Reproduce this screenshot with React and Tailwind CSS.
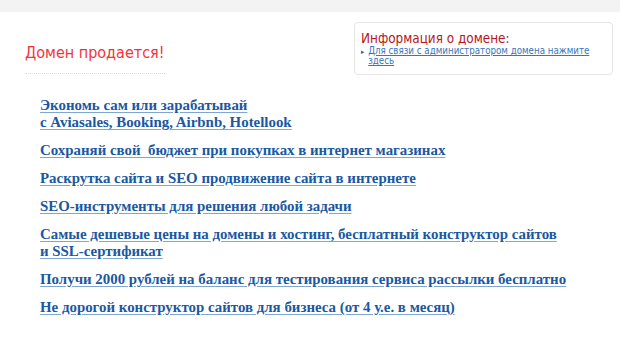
export default function App() {
    const links = [
        ['Экономь сам или зарабатывай', 'с Aviasales, Booking, Airbnb, Hotellook'],
        ['Сохраняй свой  бюджет при покупках в интернет магазинах'],
        ['Раскрутка сайта и SEO продвижение сайта в интернете'],
        ['SEO-инструменты для решения любой задачи'],
        ['Самые дешевые цены на домены и хостинг, бесплатный конструктор сайтов', 'и SSL-сертификат'],
        ['Получи 2000 рублей на баланс для тестирования сервиса рассылки бесплатно'],
        ['Не дорогой конструктор сайтов для бизнеса (от 4 у.е. в месяц)'],
    ];

    return (
        <div className="w-[620px] h-[343px] bg-white overflow-hidden">
            <div className="h-3 bg-[#f3f3f3]"></div>

            <div className="flex justify-between pl-[25px] pr-[7px]">
                <div className="pt-[31px]">
                    <h1 className="font-['DejaVu_Sans_Condensed','DejaVu_Sans',sans-serif] text-[16px] leading-[20px] text-[#f2333b]">
                        Домен продается!
                    </h1>
                    <div className="mt-[10px] w-[140px] border-t border-dotted border-[#dcdcdc]"></div>
                </div>

                <div className="mt-[10px] w-[259px] h-[53px] rounded-[4px] border border-[#e6e6e6] px-[6px] pt-[9px] font-['DejaVu_Sans_Condensed','DejaVu_Sans',sans-serif]">
                    <div className="text-[13.4px] leading-[14px] text-[#b5161d]">Информация о домене:</div>
                    <div className="flex items-start gap-[4px] text-[9.7px] leading-[10px]">
                        <span className="text-[#2a5aa8] text-[7px] leading-[12px]">▸</span>
                        <a href="#" className="text-[#3a75b8] underline">
                            Для связи с администратором домена нажмите здесь
                        </a>
                    </div>
                </div>
            </div>

            <div className="flex flex-col gap-[11px] pl-[40px] mt-[22px] font-['Liberation_Serif',serif] font-bold text-[14.9px] leading-[17px]">
                {links.map((l, i) => (
                    <a key={i} href="#" className="text-[#1a58a2] underline decoration-[#7ea6d4] underline-offset-2">
                        {l.map((t, j) => (
                            <div key={j} className="whitespace-pre">{t}</div>
                        ))}
                    </a>
                ))}
            </div>
        </div>
    );
}
